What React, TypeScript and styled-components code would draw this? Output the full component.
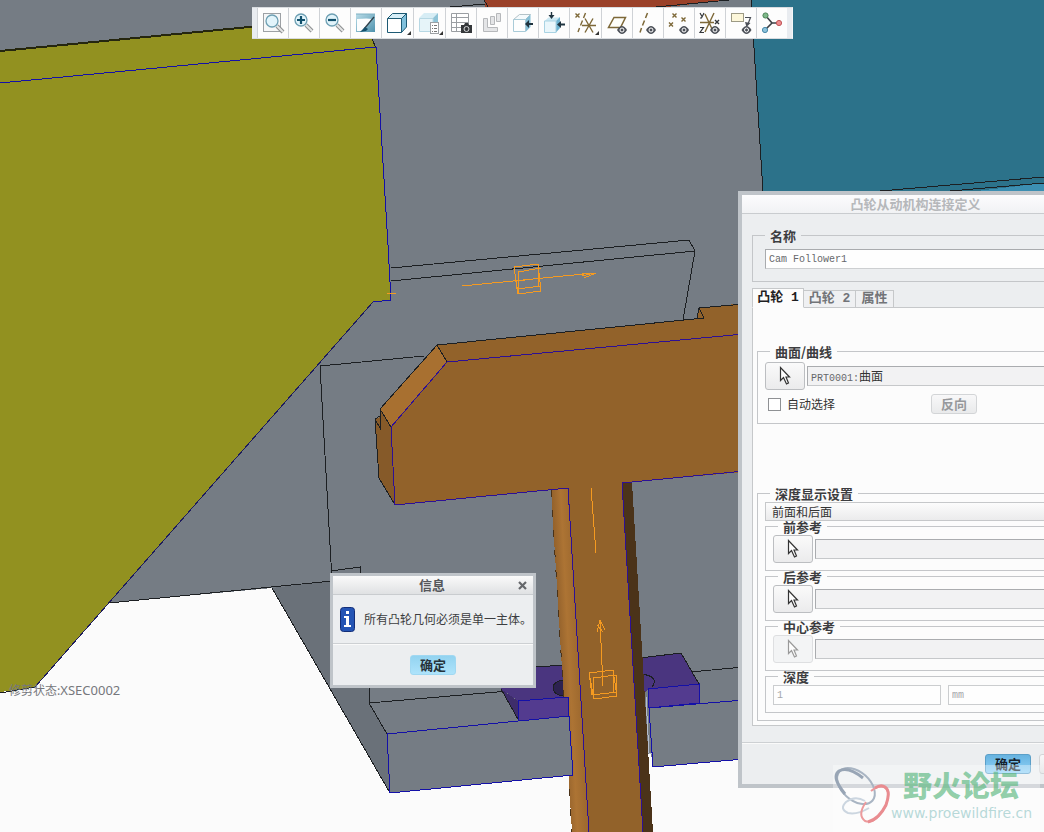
import React from "react";
import styled, { createGlobalStyle, css } from "styled-components";

const GlobalStyle = createGlobalStyle`
  *, *::before, *::after { box-sizing: border-box; }
  body {
    margin: 0;
    background: #fbfbfb;
    color: #333;
    font-family: "Noto Sans CJK SC", sans-serif;
    font-size: 12px;
    line-height: 16px;
  }
  button, input, select { margin: 0; font: inherit; color: inherit; }
`;

const mono = css`
  font-family: "Liberation Mono", "Noto Sans CJK SC", monospace;
  font-size: 10px;
`;

/* ---------- canvas ---------- */

const Viewport = styled.main`
  position: relative;
  min-height: 100vh;
  overflow: hidden;
`;

const SceneSvg = styled.svg`
  position: absolute;
  inset: 0;
  width: 100%;
  height: 100%;
`;

const StatusLabel = styled.p`
  position: absolute;
  left: 9px;
  top: 682px;
  margin: 0;
  color: #76777c;
`;

const SectionName = styled.span`
  font-family: "Noto Sans", sans-serif;
  font-size: 13px;
`;

/* ---------- toolbar ---------- */

const ToolbarRow = styled.div`
  position: relative;
  display: flex;
  justify-content: center;
  padding-top: 7px;
`;

const Toolbar = styled.div`
  display: flex;
  height: 32px;
  padding: 0 5px;
  background: #e9ecf0;
  border-top: 1px solid #d9dce0;
  border-bottom: 1px solid #d9dce0;
  border-right: 1px solid #f4f6f8;
`;

const ToolButton = styled.button<{ $menu?: boolean }>`
  display: block;
  width: ${(p) => (p.$menu ? 32 : 31)}px;
  height: 30px;
  padding: 0;
  border: 0;
  border-left: 1px solid #cfd2d6;
  background: #fdfdfd;
  svg { display: block; }
`;

/* ---------- dialogs ---------- */

const Dialog = styled.section<{ $x: number; $y: number; $w: number; $frame: number }>`
  position: absolute;
  left: ${(p) => p.$x}px;
  top: ${(p) => p.$y}px;
  width: ${(p) => p.$w}px;
  border: ${(p) => p.$frame}px solid #bfc4c9;
  background: #eceef0;
`;

const TitleBar = styled.header<{ $inactive?: boolean }>`
  display: grid;
  grid-template-columns: 20px 1fr 22px;
  align-items: center;
  height: 19px;
  border-bottom: 1px solid #c9cccf;
  background: ${(p) =>
    p.$inactive ? "linear-gradient(#fcfcfd, #f1f2f4)" : "linear-gradient(#fafafa, #dfe1e3)"};
  color: ${(p) => (p.$inactive ? "#b6b8bb" : "#55575b")};
`;

const Title = styled.h2`
  grid-column: 2;
  margin: 0;
  text-align: center;
  font-size: 13px;
  line-height: 18px;
  font-weight: 700;
`;

const CloseButton = styled.button`
  display: flex;
  align-items: center;
  justify-content: center;
  height: 18px;
  padding: 0;
  border: 0;
  background: none;
`;

const DialogBody = styled.div`
  padding: 16px 10px;
`;

const Footer = styled.footer<{ $center?: boolean }>`
  display: flex;
  justify-content: ${(p) => (p.$center ? "center" : "flex-end")};
  gap: 8px;
  padding: 11px ${(p) => (p.$center ? 0 : 6)}px 10px;
  border-top: 1px solid #cdd0d3;
  box-shadow: inset 0 1px #fafafa;
`;

const PushButton = styled.button<{ $tone?: "primary" | "light" | "plain" }>`
  width: 46px;
  height: 20px;
  padding: 0;
  border-radius: 3px;
  font-size: 13px;
  line-height: 18px;
  font-weight: 700;
  ${(p) =>
    p.$tone === "primary"
      ? css`border: 1px solid #5b9fc8; background: linear-gradient(#67b3e0, #8fd2f8); color: #16222c;`
      : p.$tone === "light"
      ? css`border: 1px solid #a0d8f2; background: linear-gradient(#93d3f0, #aee3fb); color: #26323a;`
      : css`border: 1px solid #d3d5d7; background: linear-gradient(#f8f8f9, #e9eaeb); color: #96989b;`}
`;

const MessageRow = styled.div`
  display: flex;
  align-items: center;
  gap: 9px;
  height: 48px;
  padding-left: 7px;
  white-space: nowrap;
  color: #3c3d40;
`;

/* ---------- form parts ---------- */

const Group = styled.fieldset<{ $pad: string }>`
  min-width: 0;
  margin: 0;
  padding: ${(p) => p.$pad};
  border: 1px solid #c4c6c9;
`;

const Legend = styled.legend<{ $inset?: boolean }>`
  margin-left: ${(p) => (p.$inset ? 5 : 0)}px;
  padding: 0 5px;
  font-size: 13px;
  line-height: 11px;
  font-weight: 700;
  color: #3c3d40;
`;

const fieldBox = css`
  flex: 1;
  min-width: 0;
  height: 20px;
  padding: 0 3px;
  border: 1px solid #c6c8ca;
  border-radius: 0;
  line-height: 18px;
`;

const TextField = styled.input`
  ${mono}
  ${fieldBox}
  width: 100%;
  background: #fefefe;
  color: #66686b;
  border-color: #a9abae #cdcfd1 #cdcfd1 #a9abae;
  &:disabled { color: #a5a7aa; border-color: #cbcdcf; }
`;

const ReferenceField = styled.input`
  ${fieldBox}
  background: #f2f2f3;
  border-color: #aaacaf #c6c8ca #c6c8ca #aaacaf;
`;

const ReferenceValue = styled.output`
  ${fieldBox}
  background: #f2f2f3;
  border-color: #aaacaf #c6c8ca #c6c8ca #aaacaf;
`;

const MonoText = styled.span`
  ${mono}
  color: #66686b;
`;

const PickRow = styled.div`
  display: flex;
  align-items: center;
  gap: 2px;
`;

const PickButton = styled.button`
  display: flex;
  align-items: center;
  justify-content: center;
  width: 40px;
  height: 28px;
  padding: 0;
  border: 1px solid #bcbec1;
  border-radius: 3px;
  background: linear-gradient(#fafafa, #ebebec);
  color: #333;
  &:disabled { border-color: #dedfe1; background: #f3f4f5; color: #999; }
`;

const OptionRow = styled.div`
  display: flex;
  align-items: center;
  height: 20px;
  margin-top: 4px;
  padding-left: 3px;
`;

const CheckLabel = styled.label`
  display: flex;
  align-items: center;
  gap: 6px;
  width: 163px;
`;

const CheckBox = styled.input`
  appearance: none;
  width: 13px;
  height: 13px;
  border: 1px solid #8f9194;
  background: #fff;
`;

const Tabs = styled.div`
  display: flex;
  align-items: flex-end;
  height: 20px;
  margin: 6px 0 -1px;
`;

const Tab = styled.button<{ $active?: boolean; $w: number }>`
  position: relative;
  width: ${(p) => p.$w}px;
  height: ${(p) => (p.$active ? 20 : 18)}px;
  padding: 0;
  border: 1px solid #c6c8ca;
  border-left-width: ${(p) => (p.$active ? 1 : 0)}px;
  border-bottom-color: ${(p) => (p.$active ? "#fcfcfc" : "#c6c8ca")};
  background: ${(p) => (p.$active ? "#fcfcfc" : "#eff0f2")};
  color: ${(p) => (p.$active ? "#1f2022" : "#727478")};
  font-family: "Liberation Mono", "Noto Sans CJK SC", monospace;
  font-size: 13px;
  line-height: 16px;
  font-weight: 700;
  white-space: nowrap;
`;

const TabPanel = styled.div`
  padding: 38px 4px 4px;
  border: 1px solid #c6c8ca;
  background: #fcfcfc;
`;

const DepthGroup = styled(Group)`
  margin-top: 64px;
`;

const SideSelect = styled.select`
  display: block;
  appearance: none;
  width: 100%;
  height: 19px;
  padding: 0 6px;
  border: 1px solid #c6c8ca;
  border-radius: 0;
  background: linear-gradient(#fcfcfc, #ebebec);
  line-height: 16px;
`;

const DepthRow = styled.div`
  display: grid;
  grid-template-columns: 168px 1fr;
  gap: 7px;
`;

/* ---------- watermark ---------- */

const Watermark = styled.aside`
  position: absolute;
  left: 833px;
  top: 765px;
  display: flex;
  padding-right: 8px;
  background: rgba(255, 255, 255, 0.35);
  pointer-events: none;
`;

const WatermarkText = styled.div`
  display: flex;
  flex-direction: column;
  height: 67px;
`;

const ForumName = styled.strong`
  padding: 4px 0 2px 12px;
  font-size: 29px;
  line-height: 30px;
  font-weight: 900;
  color: rgba(92, 184, 128, 0.68);
`;

const ForumUrl = styled.span`
  font-family: "DejaVu Sans", sans-serif;
  font-size: 14px;
  line-height: 24px;
  color: rgba(160, 205, 205, 0.75);
`;

/* ---------- drawings ---------- */

const K = "#1c1f22";
const B = "#1410a8";
const OR = "#f59a20";

const Scene = () => (
  <SceneSvg viewBox="0 0 1044 832" preserveAspectRatio="xMinYMin slice" shapeRendering="crispEdges" fill="none" aria-hidden="true">
    <defs>
      <linearGradient id="rod" gradientUnits="userSpaceOnUse" x1="560" y1="660" x2="580" y2="659">
        <stop offset="0" stopColor="#94622c" />
        <stop offset="0.45" stopColor="#ad7434" />
        <stop offset="1" stopColor="#9c682e" />
      </linearGradient>
    </defs>
    <rect width="1044" height="832" fill="#fbfbfb" />
    <path d="M0 0H1044V733L653 767L648 754L573 775L390 793L272 588L109 603L0 640Z" fill="#757c84" />
    <path d="M272 588L331 581L333 640L369 690V703L387 734L390 793Z" fill="#6a7179" />
    <path d="M648 754L653 767L651 754Z" fill="#fbfbfb" />

    <path d="M485 0H729L657 8H485Z" fill="#9a4129" />
    <path d="M450 7L485 4M484 0L487 5V8M656 7L729 0" stroke={K} />
    <path d="M751 0H1044V200H763Z" fill="#2c728a" />
    <path d="M960 193L1044 183V193Z" fill="#3c8fb2" />
    <path d="M751 0L763 192M880 191L1044 177M950 191L1044 183" stroke={K} />

    <path d="M0 51L350 17L372 39L376 48L391 300L373 302L35 687L0 692Z" fill="#929120" />
    <path d="M0 51L350 17M372 39L376 48M35 687L0 693" stroke={K} />
    <path d="M0 51L260 26" stroke="#25260f" strokeWidth="2" />
    <path d="M0 83L376 47L388 245L391 300L373 302" stroke={B} />
    <path d="M373 302L35 687" stroke="#1e1c5e" />

    <path d="M391 268L689 240L695 251L391 281M695 251L683 320" stroke={K} />
    <path d="M424 356L320 366L332 580M109 603L332 581M331 571L360 567V574M369 688V703L387 734M369 703L520 690M690 672L744 667M272 588L390 793" stroke={K} />
    <path d="M744 700L649 708L653 767L744 759" stroke={B} />
    <path d="M646 697L649 753H652" stroke="#b5bdcb" />

    <path d="M500 688L536 667L565 665L569 698L518 701Z" fill="#4a357f" />
    <path d="M501 689L518 701L519 721Z" fill="#3e2d6b" />
    <ellipse cx="564" cy="688" rx="11" ry="8" fill="#2d2250" stroke={K} />
    <path d="M536 667L565 665M501 689L519 721" stroke={K} />
    <path d="M640 658L681 653L699 684L648 689L642 696Z" fill="#4a357f" />
    <path d="M648 689L699 684V703L649 708Z" fill="#533b8f" stroke={B} />
    <path d="M640 658L681 653L699 684M642 674Q660 677 652 687" stroke={K} />

    <path d="M551 489H569L590 832H572Z" fill="url(#rod)" />
    <path d="M621 482H632L653 832H642Z" fill="#4b3319" />
    <path d="M568 488L622 480L643 832H589Z" fill="#92622a" />
    <path d="M551 490L572 832" stroke="#4a3218" strokeDasharray="7 13" />

    <path d="M387 734L569 716L573 775L390 793Z" fill="#757c84" stroke={B} />
    <path d="M518 701L568 697L569 716L519 721Z" fill="#533b8f" stroke={B} />

    <path d="M437 345L697 319L699 308L744 303V472L622 483L568 488L395 505L391 427L447 362Z" fill="#92622a" />
    <path d="M437 345L447 362L391 427L380 409Z" fill="#a87030" />
    <path d="M380 409L391 427L395 505L379 478L375 420L380 417Z" fill="#865a29" />
    <path d="M447 362L437 345L704 318L699 308L744 304M699 308L697 319M437 345L380 409L391 427M380 409V428L375 419L379 478L395 505M375 419L380 416" stroke={K} />
    <path d="M744 334L447 362L391 427L395 505L568 488L589 832M744 471L622 483L643 832" stroke="#2d1096" />

    <g stroke={OR}>
      <path d="M462 286L594 273M582 273L596 273L584 278M582 276L594 273M387 293H396" />
      <path d="M514 267L538 264L541 291L518 294ZM518 272L541 268M514 267L517 289L541 286M518 272V294M538 264V287M517 281L541 278" />
      <path d="M591 488L596 553M603 686L600 621M597 632L600 620L605 630M597 625L603 632" />
      <path d="M589 673L613 670L617 696L594 699ZM593 678L616 675M589 673L592 695L617 692M593 678L594 699M613 670L614 693M616 675L617 696" />
    </g>
  </SceneSvg>
);

const Eye = ({ x, y }: { x: number; y: number }) => (
  <g>
    <path d={`M${x - 5} ${y}Q${x} ${y - 8} ${x + 5} ${y}Q${x} ${y + 8} ${x - 5} ${y}Z`} fill="#4c5058" />
    <circle cx={x} cy={y} r="2" fill="#4c5058" stroke="#fff" strokeWidth="1" />
  </g>
);

const Lens = ({ x, y, sign }: { x: number; y: number; sign?: string }) => (
  <g>
    <path d={`M${x + 5} ${y + 5}L${x + 11} ${y + 11}`} stroke="#8d9092" strokeWidth="4" />
    <path d={`M${x + 5} ${y + 5}L${x + 11} ${y + 11}`} stroke="#e4e5e6" strokeWidth="2" />
    <circle cx={x} cy={y} r="6" fill="#e2f4fb" stroke="#6d9fb3" strokeWidth="1.3" />
    {sign && <path d={sign} stroke="#12506c" strokeWidth="2.2" />}
  </g>
);

const Cross = ({ x, y, c = "#7d6838" }: { x: number; y: number; c?: string }) => (
  <path d={`M${x - 2} ${y - 2}L${x + 2} ${y + 2}M${x + 2} ${y - 2}L${x - 2} ${y + 2}`} stroke={c} strokeWidth="1.4" />
);

const tri = <path d="M29 23V27H25Z" fill="#333" />;
const olive = "#7d6838";

const tools: { label: string; menu?: boolean; art: React.ReactNode }[] = [
  { label: "重新调整", art: (<><rect x="5.500" y="5.500" width="17" height="18" fill="#f6f7f8" stroke="#9da1a5" /><Lens x={14} y={13} /></>) },
  { label: "放大", art: <Lens x={12} y={12} sign="M8 12H16M12 8V16" /> },
  { label: "缩小", art: <Lens x={12} y={12} sign="M8 12H16" /> },
  {
    label: "重画",
    art: (
      <>
        <defs><linearGradient id="paint" x1="0" y1="0" x2="1" y2="1"><stop offset="0" stopColor="#b9dce8" /><stop offset="1" stopColor="#4f93ae" /></linearGradient></defs>
        <rect x="5" y="6" width="19" height="18" fill="url(#paint)" />
        <path d="M6 11Q17 10 21 11L12 23H6Z" fill="#fbfdfe" />
        <path d="M5 6H24" stroke="#7fb0c2" />
        <path d="M23 9L13 21" stroke="#2d3f4a" strokeWidth="1.3" />
        <path d="M14 19L9 24L15 23L17 21Z" fill="#14506c" />
      </>
    ),
  },
  {
    label: "显示样式", menu: true,
    art: (
      <g strokeLinejoin="round" stroke="#1d5a74">
        <path d="M5.500 10.500L10.500 5.500H24.500L19.500 10.500Z" fill="#d5eef8" />
        <path d="M19.500 10.500L24.500 5.500V19L19.500 24.500Z" fill="#7fc0dc" />
        <path d="M5.500 10.500H19.500V24.500H5.500Z" fill="#fff" />
        <g stroke="none">{tri}</g>
      </g>
    ),
  },
  {
    label: "已保存方向", menu: true,
    art: (
      <>
        <path d="M5 10L10 5H24L19 10Z" fill="#d7edf5" /><path d="M19 10L24 5V18L19 24Z" fill="#8fc4d8" />
        <path d="M5.500 10.500H19V23.500H5.500Z" fill="#e6f4f9" stroke="#b7d8e4" />
        <rect x="16.500" y="14.500" width="8" height="11" fill="#fff" stroke="#9da1a5" />
        <path d="M18 17.500H19M20 17.500H23M18 20.500H19M20 20.500H23M18 23.500H19M20 23.500H23" stroke="#777" />
        {tri}
      </>
    ),
  },
  {
    label: "视图管理器",
    art: (
      <>
        <path d="M5.500 5.500H22.500V23.500H5.500ZM5.500 9.500H22.500M5.500 14.500H22.500M5.500 19.500H22.500M10.500 5.500V23.500" stroke="#9a9ea2" fill="#fff" />
        <path d="M15 17H18L19 15H22L23 17H26V25H15Z" fill="#34373a" /><circle cx="20.500" cy="21" r="2.500" fill="#34373a" stroke="#d5d7d9" />
      </>
    ),
  },
  { label: "透视图", art: <path d="M6.500 10.500H10.500V19.500H20.500V23.500H6.500ZM13.500 8.500H17.500V16.500H13.500ZM19.500 5.500H23.500V13.500H19.500Z" fill="#e4e5e7" stroke="#b6b8bb" /> },
  {
    label: "剖面",
    art: (
      <>
        <path d="M5.500 11.500L11.500 6.500H22.500L17.500 11.500Z" fill="#f5fafc" stroke="#b3c2c8" />
        <path d="M17.500 11.500L22.500 6.500V19L17.500 24Z" fill="#86bfd6" />
        <path d="M5.500 11.500H17.500V23.500H5.500Z" fill="#fdfefe" stroke="#a9cbd8" />
        <path d="M17 16L21 12V15H25V17H21V20Z" fill="#1f3440" />
      </>
    ),
  },
  {
    label: "修剪",
    art: (
      <>
        <path d="M5.500 13L9.500 9.500H21L17 13Z" fill="#cbe8f3" />
        <path d="M17 13L21 9V20L17 24.500Z" fill="#6fb3d0" />
        <path d="M5.500 13H17V24.500H5.500Z" fill="#e9f6fb" stroke="#a9d3e3" />
        <path d="M12.500 4V7" stroke="#1f3440" strokeWidth="1.400" /><path d="M9.500 7H15.500L12.500 11Z" fill="#1f3440" />
        <path d="M18 16.500L22 13V15.500H26V17.500H22V20Z" fill="#1f3440" />
      </>
    ),
  },
  {
    label: "基准显示过滤器", menu: true,
    art: (
      <>
        <Cross x={7.5} y={7.5} />
        <path d="M15.500 5L13.500 10M12.500 12.500L10.500 17.500M9.500 20L8 24M12 17.500H26M15 10.500L23 24.500M23 10.500L15 24.500" stroke={olive} strokeWidth="1.400" />
        {tri}
      </>
    ),
  },
  { label: "平面显示", art: (<><path d="M12 9.500H23.500L18.500 19.500H6.500Z" stroke={olive} strokeWidth="1.500" fill="#fefefa" /><Eye x={20} y={22} /></>) },
  { label: "轴显示", art: (<><path d="M14.500 5L12.500 10M11.500 12.500L9.500 17.500M8.500 20L7 24.500" stroke={olive} strokeWidth="1.500" /><Eye x={18} y={22} /></>) },
  { label: "点显示", art: (<><Cross x={10.5} y={7.5} /><Cross x={19.5} y={11.5} /><Cross x={7} y={16.5} /><Eye x={20} y={22} /></>) },
  {
    label: "坐标系显示",
    art: (
      <>
        <path d="M5 14.500H19M10 6L18 23M19 5L10 24" stroke={olive} strokeWidth="1.400" />
        <path d="M5 5L7 8.500M9 5L6.500 10H5M5 19.500H8.500L5 24.500H9" stroke="#33363a" strokeWidth="1.200" />
        <Cross x={22} y={14} c="#33363a" /><Eye x={20} y={22} />
      </>
    ),
  },
  {
    label: "注释显示",
    art: (
      <>
        <rect x="5.500" y="5.500" width="12" height="8" fill="#fdf7da" stroke="#9d9a85" />
        <path d="M19 9.500H24.500L22 16" stroke="#4c5058" strokeWidth="1.200" /><path d="M19 14L24.500 15L20.500 19Z" fill="#4c5058" />
        <Eye x={20.5} y={22} />
      </>
    ),
  },
  {
    label: "旋转中心",
    art: (
      <>
        <path d="M8.500 7.500L15 15L8 22M15 15H21" stroke="#3b3f44" strokeWidth="1.600" />
        <circle cx="8.500" cy="7.500" r="2.600" fill="#7fb98a" stroke="#4c8558" />
        <circle cx="22" cy="15" r="2.600" fill="#ef8d8f" stroke="#bf5457" />
        <circle cx="8" cy="22" r="2.600" fill="#8cc3dc" stroke="#4888a8" />
      </>
    ),
  },
];

const ArrowIcon = () => (
  <svg width="14" height="20" viewBox="0 0 14 20" fill="none" stroke="currentColor" strokeWidth="1.200" aria-hidden="true">
    <path d="M2.500 1.500V14.500L5.500 11.500L8.500 18L10.500 17L8 11H11.500Z" fill="#fdfdfd" />
  </svg>
);

const InfoIcon = () => (
  <svg width="15" height="25" viewBox="0 0 15 25" aria-hidden="true">
    <rect x="0.500" y="0.500" width="14" height="24" rx="3" fill="#2454b4" stroke="#132e78" />
    <path d="M6 4H9V7H6ZM4 9H9V18H11V20H4V18H6V11H4Z" fill="#fff" />
  </svg>
);

const ReferenceGroup = ({ name, disabled }: { name: string; disabled?: boolean }) => (
  <Group $pad="3px 7px 7px">
    <Legend $inset>{name}</Legend>
    <PickRow>
      <PickButton type="button" disabled={disabled} aria-label={`选择${name}`}>
        <ArrowIcon />
      </PickButton>
      <ReferenceField aria-label={name} readOnly />
    </PickRow>
  </Group>
);

const CamDialog = () => (
  <Dialog $x={738} $y={191} $w={357} $frame={4} aria-label="凸轮从动机构连接定义">
    <TitleBar $inactive>
      <Title>凸轮从动机构连接定义</Title>
    </TitleBar>
    <DialogBody>
      <Group $pad="8px 12px 12px">
        <Legend>名称</Legend>
        <PickRow>
          <TextField aria-label="名称" defaultValue="Cam Follower1" />
        </PickRow>
      </Group>
      <Tabs role="tablist">
        <Tab role="tab" aria-selected $active $w={52}>凸轮 1</Tab>
        <Tab role="tab" $w={52}>凸轮 2</Tab>
        <Tab role="tab" $w={38}>属性</Tab>
      </Tabs>
      <TabPanel role="tabpanel">
        <Group $pad="5px 7px 9px">
          <Legend $inset>曲面/曲线</Legend>
          <PickRow>
            <PickButton type="button" aria-label="选择曲面"><ArrowIcon /></PickButton>
            <ReferenceValue aria-label="曲面/曲线">
              <MonoText>PRT0001:</MonoText>曲面
            </ReferenceValue>
          </PickRow>
          <OptionRow>
            <CheckLabel><CheckBox type="checkbox" />自动选择</CheckLabel>
            <PushButton type="button" $tone="plain" disabled>反向</PushButton>
          </OptionRow>
        </Group>
        <DepthGroup $pad="3px 7px 7px">
          <Legend $inset>深度显示设置</Legend>
          <SideSelect aria-label="深度显示设置" defaultValue="both">
            <option value="both">前面和后面</option>
          </SideSelect>
          <ReferenceGroup name="前参考" />
          <ReferenceGroup name="后参考" />
          <ReferenceGroup name="中心参考" disabled />
          <Group $pad="3px 7px 7px">
            <Legend $inset>深度</Legend>
            <DepthRow>
              <TextField aria-label="深度" defaultValue="1" disabled />
              <TextField aria-label="单位" defaultValue="mm" disabled />
            </DepthRow>
          </Group>
        </DepthGroup>
      </TabPanel>
    </DialogBody>
    <Footer>
      <PushButton type="button" $tone="primary">确定</PushButton>
      <PushButton type="button" $tone="plain">取消</PushButton>
    </Footer>
  </Dialog>
);

const MessageDialog = () => (
  <Dialog $x={330} $y={573} $w={206} $frame={3} role="alertdialog" aria-label="信息">
    <TitleBar>
      <Title>信息</Title>
      <CloseButton type="button" aria-label="关闭">
        <svg width="9" height="9" viewBox="0 0 9 9" stroke="#66686c" strokeWidth="2.200" aria-hidden="true">
          <path d="M1 1L8 8M8 1L1 8" />
        </svg>
      </CloseButton>
    </TitleBar>
    <MessageRow>
      <InfoIcon />
      <span>所有凸轮几何必须是单一主体。</span>
    </MessageRow>
    <Footer $center>
      <PushButton type="button" $tone="light">确定</PushButton>
    </Footer>
  </Dialog>
);

const App = () => (
  <>
    <GlobalStyle />
    <Viewport>
      <Scene />
      <ToolbarRow>
        <Toolbar role="toolbar" aria-label="图形">
          {tools.map((t) => (
            <ToolButton key={t.label} type="button" $menu={t.menu} aria-label={t.label}>
              <svg width="30" height="30" viewBox="0 0 30 30" fill="none" aria-hidden="true">{t.art}</svg>
            </ToolButton>
          ))}
        </Toolbar>
      </ToolbarRow>
      <StatusLabel>修剪状态:<SectionName>XSEC0002</SectionName></StatusLabel>
      <MessageDialog />
      <CamDialog />
      <Watermark>
        <svg width="58" height="67" viewBox="0 0 58 67" fill="none" aria-hidden="true">
          <ellipse cx="23" cy="21" rx="22" ry="14" transform="rotate(42 23 21)" stroke="#a9b5c3" strokeWidth="2" />
          <path d="M12 29Q-2 12 6 6Q15 1 30 13" stroke="#98a5b5" strokeWidth="3" />
          <path d="M36 43Q24 50 15 48Q6 44 13 37Q22 30 32 36" stroke="#ccd6e0" strokeWidth="2" />
          <path d="M33 37Q24 50 32 56Q42 60 52 42Q59 26 51 22Q45 20 38 26" stroke="#ec9a9c" strokeWidth="2" />
          <path d="M35 57Q46 54 53 40Q58 26 52 22Q48 19 42 23" stroke="#e98c90" strokeWidth="3" />
        </svg>
        <WatermarkText>
          <ForumName>野火论坛</ForumName>
          <ForumUrl>www.proewildfire.cn</ForumUrl>
        </WatermarkText>
      </Watermark>
    </Viewport>
  </>
);

export default App;
